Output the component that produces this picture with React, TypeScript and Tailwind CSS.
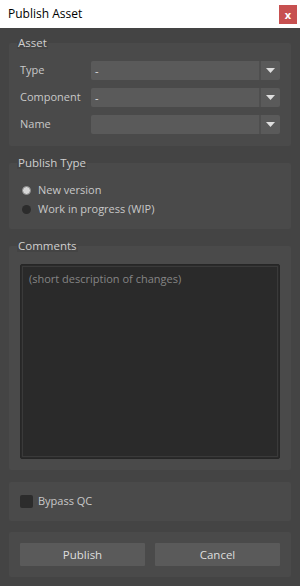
import { ReactNode } from "react"

const font = { fontFamily: '"Open Sans", "Noto Sans", sans-serif' }

function Group({ label, className, children }: { label?: string; className: string; children: ReactNode }) {
  return (
    <div className={`relative rounded-[2px] bg-[#4a4a4a] ${className}`}>
      {label && (
        <span className="absolute -top-[7px] left-[8px] bg-[#444444] px-[1px] text-[11.5px] leading-[13px] text-[#cfcfcf]">
          {label}
        </span>
      )}
      {children}
    </div>
  )
}

function Combo({ label, value }: { label: string; value: string }) {
  return (
    <div className="flex items-center h-[19px]">
      <span className="w-[71px] text-[11px] text-[#c8c8c8]">{label}</span>
      <div className="flex flex-1 h-[19px] rounded-[2px] bg-[#5a5a5a] overflow-hidden">
        <span className="flex-1 pl-[4px] text-[11px] leading-[19px] text-[#e0e0e0]">{value}</span>
        <div className="w-[2px] bg-[#4f4f4f]" />
        <div className="flex w-[19px] items-center justify-center">
          <svg width="9" height="5" viewBox="0 0 9 5">
            <path d="M0 0 H9 L4.5 5 Z" fill="#dedede" />
          </svg>
        </div>
      </div>
    </div>
  )
}

function Radio({ label, checked }: { label: string; checked?: boolean }) {
  return (
    <div className="flex items-center h-[19px]">
      <span
        className={`ml-[2px] mr-[7px] h-[9px] w-[9px] rounded-full ${
          checked ? "bg-[#d6d6d6] border border-[#8a8a8a]" : "bg-[#2c2c2c]"
        }`}
      />
      <span className="text-[11px] text-[#c8c8c8]">{label}</span>
    </div>
  )
}

export default function App() {
  return (
    <div className="flex flex-col h-[586px] w-[300px] bg-[#444444] overflow-hidden" style={font}>

      {/* Title bar */}

      <div className="flex items-center justify-between h-[28px] bg-white pl-[8px] pr-[3px]">
        <span className="text-[12px] text-black">Publish Asset</span>
        <div className="flex h-[19px] w-[18px] items-center justify-center bg-[#c75050] text-[11px] font-bold leading-none text-white">
          x
        </div>
      </div>

      <div className="flex flex-col px-[9px]">

        {/* Asset */}

        <Group label="Asset" className="mt-[15px] flex flex-col gap-[8px] px-[11px] pt-[18px] pb-[12px]">
          <Combo label="Type" value="-" />
          <Combo label="Component" value="-" />
          <Combo label="Name" value="" />
        </Group>

        {/* Publish Type */}

        <Group label="Publish Type" className="mt-[17px] px-[11px] pt-[18px] pb-[10px]">
          <Radio label="New version" checked />
          <Radio label="Work in progress (WIP)" />
        </Group>

        {/* Comments */}

        <Group label="Comments" className="mt-[17px] px-[11px] pt-[18px] pb-[11px]">
          <div className="h-[195px] rounded-[2px] border border-[#262626] bg-[#2a2a2a] p-[1px]">
            <div className="h-full border border-[#3a3a3a] px-[6px] pt-[4px] text-[11px] text-[#858585]">
              (short description of changes)
            </div>
          </div>
        </Group>

        {/* Bypass */}

        <Group className="mt-[12px] flex items-center h-[39px] px-[11px]">
          <span className="mr-[5px] h-[13px] w-[13px] rounded-[2px] bg-[#2c2c2c]" />
          <span className="text-[11px] text-[#c8c8c8]">Bypass QC</span>
        </Group>

        {/* Buttons */}

        <Group className="mt-[11px] flex gap-[10px] px-[11px] py-[11px]">
          <button className="flex-1 h-[23px] rounded-[1px] bg-[#5a5a5a] text-[11.5px] text-[#dedede]">
            Publish
          </button>
          <button className="flex-1 h-[23px] rounded-[1px] bg-[#5a5a5a] text-[11.5px] text-[#dedede]">
            Cancel
          </button>
        </Group>

      </div>

    </div>
  )
}
